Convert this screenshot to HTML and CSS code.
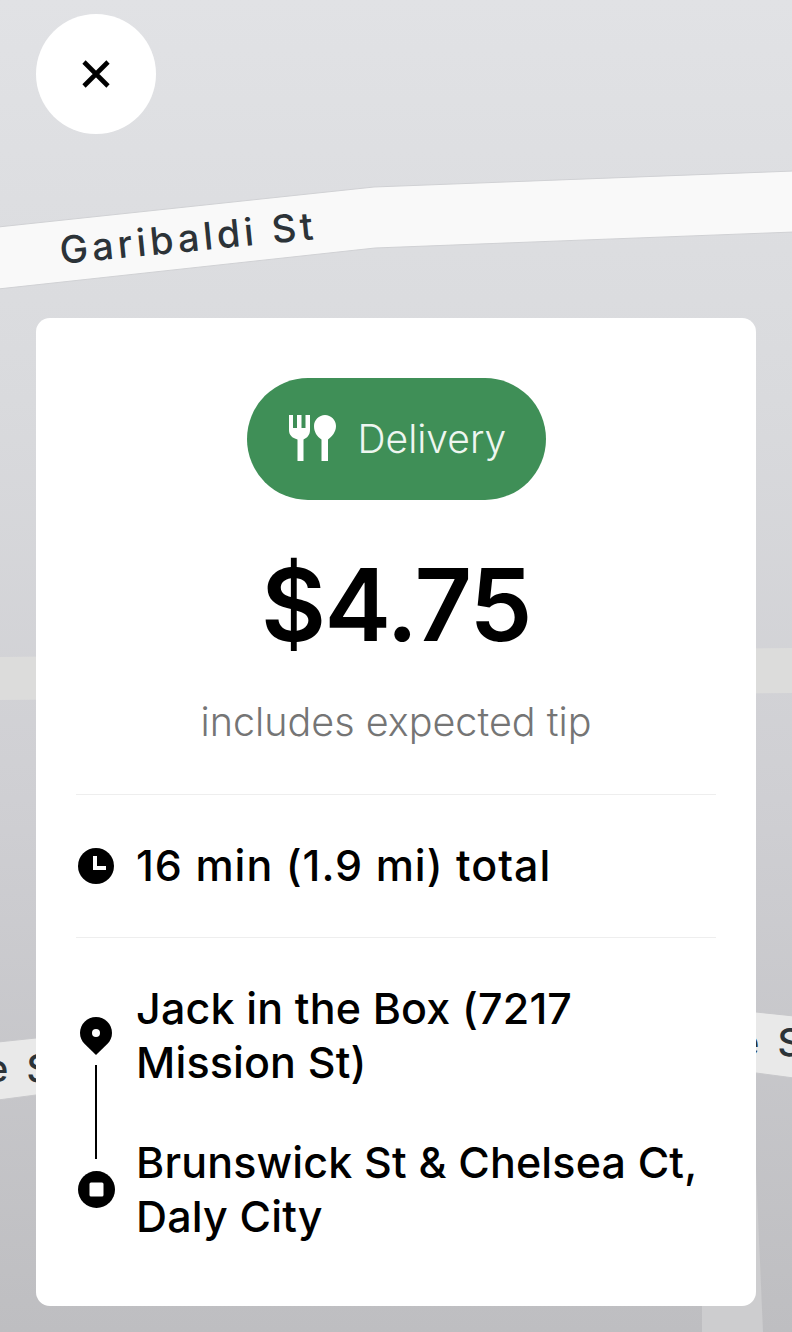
FILE: index.html
```html
<!DOCTYPE html>
<html lang="en">
<head>
    <meta charset="UTF-8">
    <meta name="viewport" content="width=device-width, initial-scale=1.0">
    <title>Delivery offer</title>
    <link rel="stylesheet" href="styles.css">
</head>
<body>
    <!-- map behind the card -->
    <svg class="map" viewBox="0 0 792 1332" aria-hidden="true">
        <defs>
            <linearGradient id="land" x1="0" y1="0" x2="0" y2="1">
                <stop offset="0" stop-color="#e1e2e5"/>
                <stop offset="0.3" stop-color="#d9dadd"/>
                <stop offset="0.6" stop-color="#cfcfd3"/>
                <stop offset="1" stop-color="#bebec1"/>
            </linearGradient>
        </defs>
        <rect width="792" height="1332" fill="url(#land)"/>
        <polygon class="road-far" points="0,657 792,648 792,693 0,700"/>
        <polygon class="road-near" points="-2,227 374,187 794,171 794,232 375,248 -2,289"/>
        <polygon class="road-low" points="-2,1042 36,1038 756,1012 794,1016 794,1078 756,1073 36,1095 -2,1100"/>
        <polygon class="road-side" points="702,1332 702,1300 756,1170 763,1332"/>
        <text class="road-name" transform="translate(61 264) rotate(-5.6)">Garibaldi St</text>
        <text class="road-name" x="-14" y="1082">e S</text>
        <text class="road-name" x="737" y="1056">e S</text>
    </svg>

    <div class="screen">
        <button class="close" type="button" aria-label="Close">
            <svg viewBox="0 0 30 30" width="30" height="30">
                <path d="M3 3l24 24M27 3L3 27" fill="none" stroke="#000" stroke-width="4.600"/>
            </svg>
        </button>

        <div class="card">
            <div class="summary">
                <div class="badge">
                    <svg class="badge-icon" viewBox="0 0 47 46" width="47" height="46">
                        <path d="M0 0h4v13h4V0h4.500v13h4V0H21v15c0 5-3 8-6.500 9.500V46h-6V24.500C3 23 0 20 0 15z" fill="#fff"/>
                        <path d="M36 0c6 0 11 5 11 11 0 6-4 10.500-8 13.500V46h-6.500V24.500C28 21.500 25 17 25 11c0-6 5-11 11-11z" fill="#fff"/>
                    </svg>
                    <span>Delivery</span>
                </div>
                <div class="price">$4.75</div>
                <div class="note">includes expected tip</div>
            </div>

            <div class="time">
                <svg class="icon" viewBox="0 0 36 36" width="36" height="36">
                    <circle cx="18" cy="18" r="18" fill="#000"/>
                    <path d="M15 8h4v10h9v4H15z" fill="#fff"/>
                </svg>
                <span>16 min (1.9 mi) total</span>
            </div>

            <div class="route">
                <div class="route-marks">
                    <svg viewBox="0 0 32 38" width="32" height="38">
                        <path d="M16 0C7 0 0 7 0 16c0 4.500 1.800 8 4.700 11L16 38l11.300-11C30.200 24 32 20.500 32 16 32 7 25 0 16 0z" fill="#000"/>
                        <circle cx="16" cy="16" r="4" fill="#fff"/>
                    </svg>
                    <div class="route-line"></div>
                    <svg viewBox="0 0 37 37" width="37" height="37">
                        <circle cx="18.500" cy="18.500" r="18.500" fill="#000"/>
                        <rect x="11.500" y="11.500" width="14" height="14" rx="1.500" fill="#fff"/>
                    </svg>
                </div>
                <div class="route-stops">
                    <div>Jack in the Box (7217 Mission St)</div>
                    <div>Brunswick St &amp; Chelsea Ct, Daly City</div>
                </div>
            </div>
        </div>
    </div>
</body>
</html>
```

FILE: styles.css
```css
body {
    margin: 0;
    font-family: Inter, "Noto Sans", sans-serif;
    color: #000;
}

.map {
    position: absolute;
    top: 0;
    left: 0;
    width: 792px;
    height: 1332px;
}

.road-near {
    fill: #f9f9f9;
    stroke: #d0d1d4;
    stroke-width: 1;
}

.road-far {
    fill: #dcdcdb;
}

.road-low {
    fill: #e9e9e9;
    stroke: #c8c8cb;
    stroke-width: 1;
}

.road-side {
    fill: #cdcdcf;
}

.road-name {
    font-size: 38px;
    font-weight: 500;
    letter-spacing: 4px;
    fill: #2c3338;
}

.screen {
    position: relative;
    height: 1332px;
    padding: 14px 36px 0;
    box-sizing: border-box;
}

.close {
    display: flex;
    align-items: center;
    justify-content: center;
    width: 120px;
    height: 120px;
    padding: 0;
    border: 0;
    border-radius: 50%;
    background-color: #fff;
}

.card {
    margin-top: 184px;
    padding: 60px 40px 63px;
    border-radius: 14px;
    background-color: #fff;
}

.summary {
    display: flex;
    flex-direction: column;
    align-items: center;
    height: 416px;
}

.badge {
    display: flex;
    align-items: center;
    gap: 22px;
    width: 299px;
    height: 122px;
    box-sizing: border-box;
    padding: 0 0 2px 42px;
    border-radius: 61px;
    background-color: #3f8f57;
    color: #eef6f0;
    font-size: 39px;
    font-weight: 300;
}

.price {
    margin-top: 47px;
    font-size: 100px;
    font-weight: 600;
    line-height: 116px;
    letter-spacing: -1.500px;
}

.note {
    margin-top: 37px;
    color: #757575;
    font-size: 39.500px;
    font-weight: 300;
    line-height: 44px;
}

.time {
    display: flex;
    align-items: center;
    height: 140px;
    padding-bottom: 2px;
    border-top: 1px solid #eee;
    border-bottom: 1px solid #eee;
    font-size: 43px;
    font-weight: 500;
    letter-spacing: 1px;
}

.icon {
    margin: 2px 22px 0 2px;
}

.route {
    display: flex;
    margin-top: 43px;
    font-size: 43px;
    font-weight: 500;
    line-height: 54px;
    letter-spacing: 0.15px;
}

.route-marks {
    display: flex;
    flex-direction: column;
    align-items: center;
    flex: none;
    width: 40px;
    margin-top: 36px;
    margin-right: 20px;
}

.route-line {
    width: 2px;
    height: 94px;
    margin: 10px 0 12px;
    background-color: #000;
}

.route-stops {
    display: flex;
    flex-direction: column;
    gap: 46px;
}
```
